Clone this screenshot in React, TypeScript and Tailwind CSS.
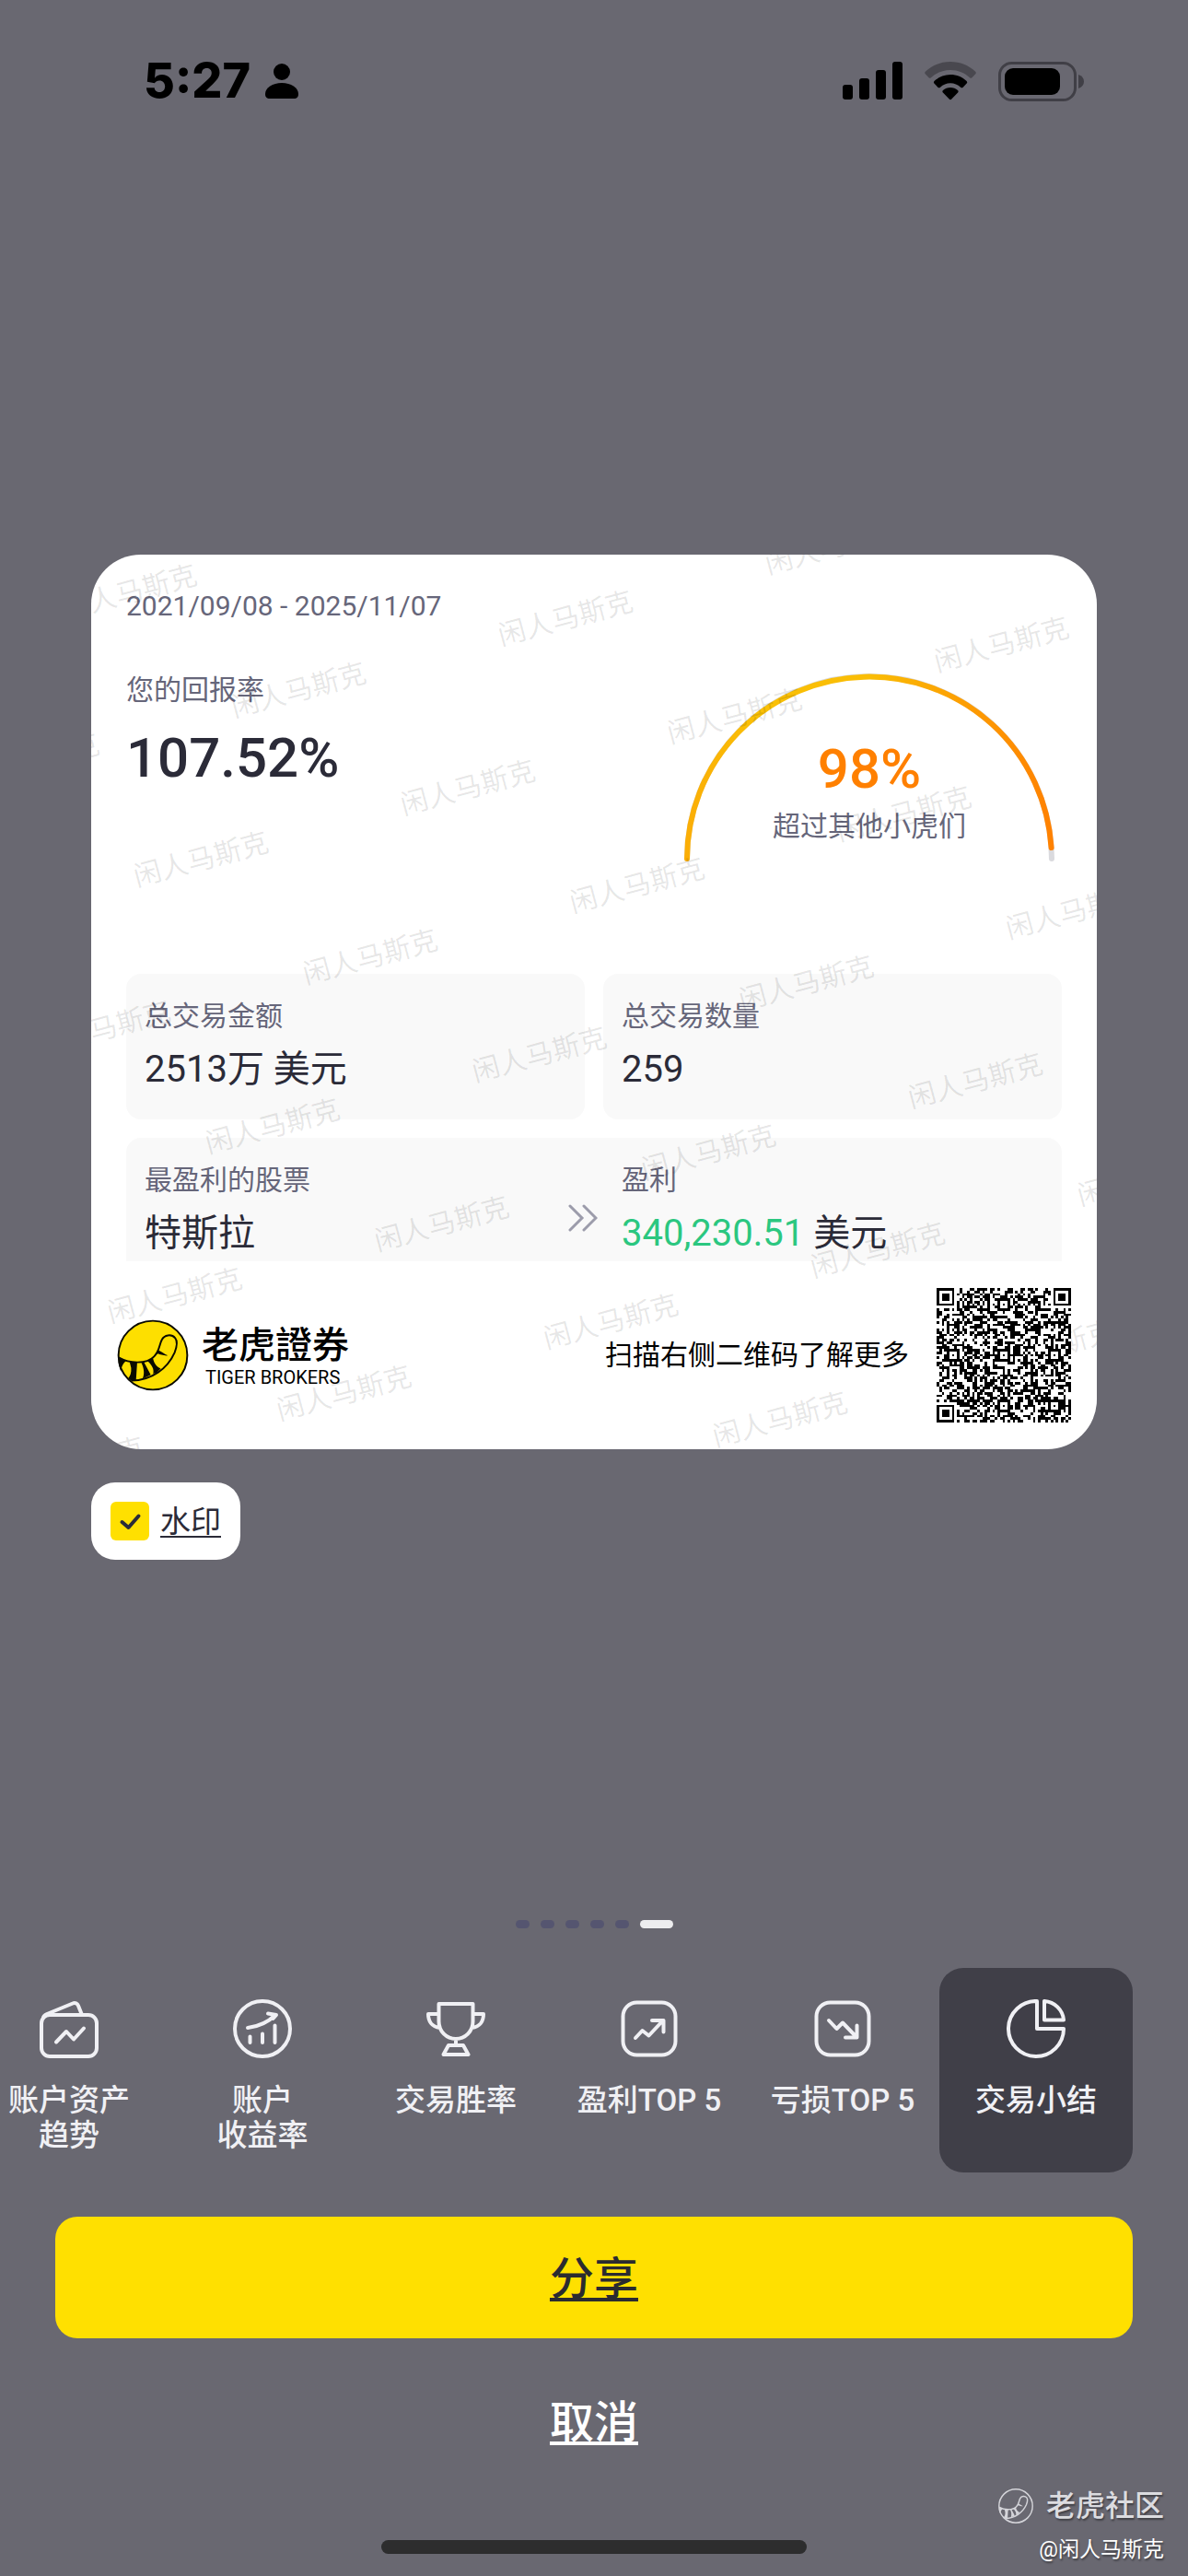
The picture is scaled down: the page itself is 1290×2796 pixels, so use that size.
import { useState, type ReactNode } from "react";

const WATERMARK = "闲人马斯克";

function StatusBar() {
  return (
    <header className="flex h-44 items-center justify-between pr-28 pl-39 text-black">
      <div className="flex items-center gap-4">
        <time className="font-['Inter'] text-[52px] leading-[56px] font-extrabold">5:27</time>
        <svg className="h-[38px] w-[36px]" viewBox="0 0 36 38" fill="currentColor" aria-hidden="true">
          <circle cx="18" cy="9" r="9" />
          <path d="M0 33C0 26 8 21 18 21s18 5 18 12c0 3.500-1.500 5-5 5H5c-3.500 0-5-1.500-5-5Z" />
        </svg>
      </div>
      <div className="flex items-center gap-6">
        <svg className="h-[42px] w-[65px]" viewBox="0 0 65 42" fill="currentColor" aria-hidden="true">
          <rect x="0" y="25" width="11" height="16" rx="3" />
          <rect x="18" y="18" width="11" height="23" rx="3" />
          <rect x="36" y="9" width="11" height="32" rx="3" />
          <rect x="54" y="0" width="11" height="41" rx="3" />
        </svg>
        <svg className="h-[42px] w-[56px]" viewBox="0 0 56 42" fill="currentColor" aria-hidden="true">
          <path opacity="0.3" d="M28 0c10.500 0 20 4 27.200 10.700.800.800.800 1.800.1 2.600l-3.800 4c-.7.700-1.800.700-2.500 0C43.500 12 36 9 28 9S12.500 12 7 17.300c-.7.700-1.800.700-2.500 0l-3.800-4c-.7-.8-.7-1.800.1-2.600C8 4 17.500 0 28 0Z" />
          <path d="M28 14c6.800 0 13 2.600 17.600 7 .8.800.8 1.800.1 2.600l-4 4.100c-.7.800-1.800.8-2.600.1C36 25 32.200 23.300 28 23.300S20 25 17 27.800c-.8.700-1.900.7-2.600-.1l-4-4.100c-.7-.8-.7-1.800.1-2.600C15 16.600 21.200 14 28 14Z" />
          <path d="M28 28c3 0 5.900 1.100 8 3 .8.700.8 1.800.1 2.600l-6.800 7c-.7.800-1.900.8-2.600 0l-6.800-7c-.7-.8-.7-1.900.1-2.600 2.100-1.900 5-3 8-3Z" />
        </svg>
        <svg className="h-[43px] w-[94px]" viewBox="0 0 94 43" aria-hidden="true">
          <rect x="1.500" y="1.500" width="82" height="40" rx="13" fill="none" stroke="#403f46" strokeWidth="3" />
          <rect x="7" y="7" width="60" height="29" rx="9" fill="#000" />
          <path d="M87 14c4 1.500 6 4 6 7.500s-2 6-6 7.500Z" fill="#403f46" />
        </svg>
      </div>
    </header>
  );
}

function TigerTail({ mono = false, className }: { mono?: boolean; className: string }) {
  const ink = mono ? "#d4d4d9" : "#0a0a00";
  return (
    <svg className={className} viewBox="20 33 238 238" aria-hidden="true">
      <circle cx="139" cy="152" r="114" fill={mono ? "none" : "#fddf00"} stroke={ink} strokeWidth={mono ? 9 : 6} />
      <path
        d="M27 160C62 180 118 182 143 156C162 136 160 116 169 100C177 85 200 80 213 95C222 106 218 125 211 143C188 195 135 236 68 236"
        fill="none"
        stroke={ink}
        strokeWidth={mono ? 9 : 6}
        strokeLinejoin="round"
      />
      <g fill={ink}>
        <path d="M25 158L50 170L43 178C37 186 34 195 33 206L26 185Z" />
        <path d="M62 174L87 176L83 237L67 237L57 228C64 222 68 210 67 194Z" />
        <path d="M101 177L110 176L132 217L105 230C112 214 110 195 101 177Z" />
        <path d="M121 171L139 160C142 178 150 190 165 196L151 210L140 213C144 198 136 184 121 171Z" />
        <path d="M147 152L157 135C167 140 177 147 189 153C175 154 163 150 156 147Z" />
      </g>
    </svg>
  );
}

function Watermark() {
  const rows = Array.from({ length: 10 }, (_, i) => i);
  const columns = Array.from({ length: 6 }, (_, i) => i);
  return (
    <div
      className="pointer-events-none absolute inset-0 flex items-center justify-center overflow-hidden"
      aria-hidden="true"
    >
      <div className="shrink-0 -rotate-15 pb-[70px] pl-1.5">
        {rows.map((row) => (
          <div key={row} className="flex h-[150px] w-[1800px] items-center even:ml-[150px]">
            {columns.map((column) => (
              <span key={column} className="w-[300px] shrink-0 text-center text-[30px] leading-10 text-black/10">
                {WATERMARK}
              </span>
            ))}
          </div>
        ))}
      </div>
    </div>
  );
}

const QR_SIZE = 53;
const ALIGNMENT = [6, 26, 46];

function qrModule(x: number, y: number): boolean {
  const last = QR_SIZE - 7;
  for (const [cx, cy] of [[0, 0], [last, 0], [0, last]]) {
    const dx = x - cx;
    const dy = y - cy;
    if (dx >= -1 && dx <= 7 && dy >= -1 && dy <= 7) {
      const ring = Math.max(Math.abs(dx - 3), Math.abs(dy - 3));
      return ring === 3 || ring <= 1;
    }
  }
  for (const cx of ALIGNMENT) {
    for (const cy of ALIGNMENT) {
      const onFinder = (cx === 6 && cy !== 26) || (cy === 6 && cx === 46);
      const ring = Math.max(Math.abs(x - cx), Math.abs(y - cy));
      if (!onFinder && ring <= 2) return ring !== 1;
    }
  }
  if (x === 6 || y === 6) return (x + y) % 2 === 0;
  let h = (x * 374761393 + y * 668265263) | 0;
  h = Math.imul(h ^ (h >>> 13), 1274126177);
  return ((h ^ (h >>> 16)) & 255) < 134;
}

function QrCode() {
  let d = "";
  for (let y = 0; y < QR_SIZE; y++) {
    for (let x = 0; x < QR_SIZE; x++) {
      if (qrModule(x, y)) d += `M${x} ${y}h1v1h-1z`;
    }
  }
  return (
    <svg
      className="size-[146px] shrink-0 bg-white"
      viewBox={`0 0 ${QR_SIZE} ${QR_SIZE}`}
      shapeRendering="crispEdges"
      role="img"
      aria-label="二维码"
    >
      <path d={d} fill="#000" />
    </svg>
  );
}

function Gauge() {
  return (
    <div className="relative mr-[7px] w-[404px]">
      <svg className="block h-[208px] w-full" viewBox="0 0 404 208" fill="none" aria-hidden="true">
        <defs>
          <linearGradient id="gauge" x1="0" y1="0" x2="404" y2="0" gradientUnits="userSpaceOnUse">
            <stop offset="0" stopColor="#fbad06" />
            <stop offset="0.200" stopColor="#fac006" />
            <stop offset="0.500" stopColor="#fabd05" />
            <stop offset="1" stopColor="#ff8000" />
          </linearGradient>
        </defs>
        <path d="M4 203A198 198 0 0 1 400 203" stroke="#dadade" strokeWidth="6" strokeLinecap="round" />
        <path d="M4 203A198 198 0 0 1 399.600 191" stroke="url(#gauge)" strokeWidth="6" strokeLinecap="round" />
      </svg>
      <div className="absolute inset-x-0 bottom-5 text-center">
        <p className="text-[60px] leading-[72px] font-medium text-[#ff8000]">98%</p>
        <p className="mt-1.5 text-[30px] leading-10 text-[#66667a]">超过其他小虎们</p>
      </div>
    </div>
  );
}

function Stat({ label, children }: { label: string; children: ReactNode }) {
  return (
    <div className="flex-1 px-5 pt-[26px]">
      <dt className="text-[30px] leading-10 text-[#66667a]">{label}</dt>
      <dd className="mt-2 text-[40px] leading-[60px]">{children}</dd>
    </div>
  );
}

function ShareCard() {
  return (
    <section className="relative mx-[99px] mt-[426px] overflow-hidden rounded-[54px] bg-white text-[#2b2b38]">
      <div className="px-[38px] pt-9">
        <p className="text-[30px] leading-10 text-[#66667a]">2021/09/08 - 2025/11/07</p>
        <div className="mt-[51px] flex justify-between">
          <div>
            <p className="text-[30px] leading-10 text-[#66667a]">您的回报率</p>
            <p className="mt-[18px] text-[60px] leading-[72px] font-medium">107.52%</p>
          </div>
          <Gauge />
        </div>
        <dl className="mt-30">
          <div className="flex gap-5">
            <div className="flex flex-1 rounded-2xl bg-[#f9f9f9] pb-6">
              <Stat label="总交易金额">2513万 美元</Stat>
            </div>
            <div className="flex flex-1 rounded-2xl bg-[#f9f9f9] pb-6">
              <Stat label="总交易数量">259</Stat>
            </div>
          </div>
          <div className="mt-5 flex items-center gap-5 rounded-t-2xl bg-[#f9f9f9]">
            <div className="flex flex-1 items-center">
              <Stat label="最盈利的股票">特斯拉</Stat>
              <svg className="-mr-3.5 mt-10 h-[30px] w-[32px]" viewBox="0 0 32 30" fill="none" stroke="#9c9cab" strokeWidth="3" strokeLinecap="round" aria-hidden="true">
                <path d="M2 2l13 13L2 28M17 2l13 13-13 13" />
              </svg>
            </div>
            <div className="flex flex-1">
              <Stat label="盈利">
                <span className="text-[#2bc780]">340,230.51</span> 美元
              </Stat>
            </div>
          </div>
        </dl>
      </div>
      <Watermark />
      <footer className="relative flex h-51 items-center justify-between px-7 text-black">
        <div className="flex items-center gap-3.5">
          <TigerTail className="size-[78px]" />
          <div className="pt-1">
            <p className="text-[40px] leading-[44px] font-medium">老虎證券</p>
            <p className="pl-1 text-[20px] leading-6">TIGER BROKERS</p>
          </div>
        </div>
        <div className="flex items-center gap-[30px]">
          <p className="text-[30px] leading-10">扫描右侧二维码了解更多</p>
          <QrCode />
        </div>
      </footer>
    </section>
  );
}

function WatermarkToggle() {
  const [on, setOn] = useState(true);
  return (
    <label className="mt-9 ml-[99px] flex h-21 items-center gap-3 self-start rounded-[26px] bg-white px-[21px] text-[#2b2b38]">
      <span className="relative size-[42px]">
        <input
          type="checkbox"
          checked={on}
          onChange={(event) => setOn(event.target.checked)}
          className="block size-full appearance-none rounded-md bg-gray-200 checked:bg-[#ffe000]"
        />
        {on && (
          <svg className="pointer-events-none absolute inset-0" viewBox="0 0 42 42" fill="none" stroke="#2b2b38" strokeWidth="4" strokeLinecap="round" strokeLinejoin="round" aria-hidden="true">
            <path d="M12.500 22l7 6L30.500 15.500" />
          </svg>
        )}
      </span>
      <span className="pt-0.5 text-[33px] leading-12 underline decoration-2 underline-offset-4 [text-decoration-skip-ink:none]">水印</span>
    </label>
  );
}

const TABS: { label: string[]; icon: ReactNode }[] = [
  {
    label: ["账户资产", "趋势"],
    icon: (
      <>
        <rect x="2" y="17" width="60" height="45" rx="9" />
        <path d="M4 20C4 18 6 17 8 16L36 4.500C38.500 3.500 41 4.500 42 7L46 17" />
        <path d="M18 46.500L29 35L37 43.500L48 31.500" />
      </>
    ),
  },
  {
    label: ["账户", "收益率"],
    icon: (
      <>
        <circle cx="32" cy="32" r="30" />
        <path d="M18.500 40.500V47M32 37.500V47M45.500 28.500V47M16 31C28 29.500 38 25 46 17M38 15.500L47 17L43.500 21" />
      </>
    ),
  },
  {
    label: ["交易胜率"],
    icon: (
      <>
        <path d="M13.500 5H50.500V24C50.500 35 42 43 32 43S13.500 35 13.500 24ZM13.500 16H2C2 24 6 30 14.500 31M50.500 16H62C62 24 58 30 49.500 31M32 43V50M24 50H40L45.500 60H18.500Z" />
      </>
    ),
  },
  {
    label: ["盈利TOP 5"],
    icon: (
      <>
        <rect x="3.500" y="3.500" width="57" height="57" rx="15" />
        <path d="M17 42L24.500 34L31.500 39.500L47 23M35 23H47.500V35.500" />
      </>
    ),
  },
  {
    label: ["亏损TOP 5"],
    icon: (
      <>
        <rect x="3.500" y="3.500" width="57" height="57" rx="15" />
        <path d="M17 23L25.500 32L32 25.500L47 41M35 41.500H47.500V28.500" />
      </>
    ),
  },
  {
    label: ["交易小结"],
    icon: (
      <path d="M33 2A30 30 0 1 0 62 32H33ZM41 2V22.500H62A22.500 22.500 0 0 0 41 2Z" />
    ),
  },
];

function Picker() {
  const [active, setActive] = useState(TABS.length - 1);
  return (
    <>
      <div className="mt-[391px] flex justify-center gap-3" aria-hidden="true">
        {TABS.map((_, i) => (
          <span
            key={i}
            className={i === active ? "h-[9px] w-9 rounded-full bg-[#ededef]" : "h-[9px] w-[15px] rounded-full bg-[#555570]"}
          />
        ))}
      </div>
      <div role="tablist" className="mt-[43px] flex justify-end overflow-hidden pr-15">
        {TABS.map((tab, i) => (
          <button
            key={tab.label[0]}
            type="button"
            role="tab"
            aria-selected={i === active}
            onClick={() => setActive(i)}
            className={
              i === active
                ? "flex h-[222px] w-[210px] shrink-0 flex-col items-center rounded-[26px] bg-[#403f48] pt-[34px] text-[#f0f0f4]"
                : "flex h-[222px] w-[210px] shrink-0 flex-col items-center rounded-[26px] pt-[34px] text-[#f0f0f4]"
            }
          >
            <svg className="size-16" viewBox="0 0 64 64" fill="none" stroke="currentColor" strokeWidth="4" strokeLinecap="round" strokeLinejoin="round" aria-hidden="true">
              {tab.icon}
            </svg>
            <span className="mt-[27px] flex flex-col text-[33px] leading-[38px] font-medium">
              {tab.label.map((line) => (
                <span key={line}>{line}</span>
              ))}
            </span>
          </button>
        ))}
      </div>
    </>
  );
}

export default function App() {
  return (
    <main className="relative flex min-h-screen flex-col overflow-hidden bg-[#696871] font-['Roboto','Noto_Sans_CJK_SC',sans-serif]">
      <StatusBar />
      <ShareCard />
      <WatermarkToggle />
      <Picker />
      <div className="mt-12 flex flex-col gap-6 px-15 text-[48px] leading-[60px] font-medium">
        <button type="button" className="h-33 rounded-3xl bg-[#ffe000] pt-1 text-[#2b2b30] underline decoration-4 underline-offset-4 [text-decoration-skip-ink:none]">
          分享
        </button>
        <button type="button" className="h-33 rounded-3xl pt-1 text-white underline decoration-4 underline-offset-4 [text-decoration-skip-ink:none]">
          取消
        </button>
      </div>
      <div className="mx-auto mt-[63px] mb-6 h-[15px] w-[462px] rounded-full bg-[#2d2d2e]" />
      <div className="absolute right-[26px] bottom-3 flex flex-col items-end text-white [text-shadow:1px_2px_2px_rgb(0_0_0/0.4)]">
        <div className="flex items-center gap-[14px] text-[#dcdce0]">
          <TigerTail mono className="size-[38px]" />
          <span className="text-[32px] leading-12 font-medium">老虎社区</span>
        </div>
        <span className="mt-2 text-[23px] leading-8">@闲人马斯克</span>
      </div>
    </main>
  );
}
